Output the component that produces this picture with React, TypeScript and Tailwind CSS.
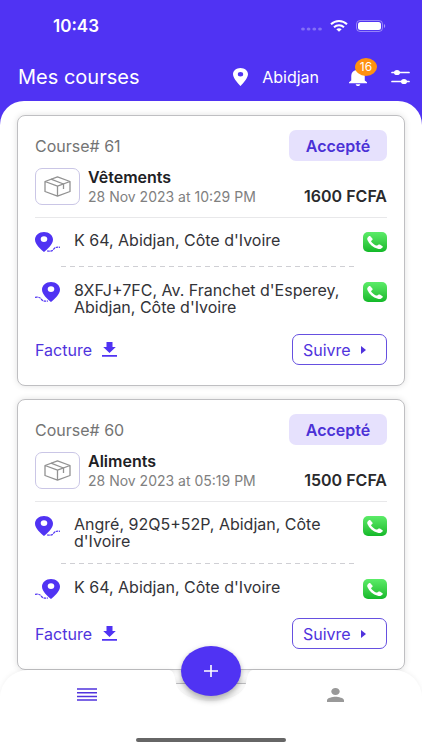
import React from "react";

type Course = {
  id: number;
  title: string;
  date: string;
  price: string;
  from: string;
  to: string;
};

const courses: Course[] = [
  {
    id: 61,
    title: "Vêtements",
    date: "28 Nov 2023 at 10:29 PM",
    price: "1600 FCFA",
    from: "K 64, Abidjan, Côte d'Ivoire",
    to: "8XFJ+7FC, Av. Franchet d'Esperey, Abidjan, Côte d'Ivoire",
  },
  {
    id: 60,
    title: "Aliments",
    date: "28 Nov 2023 at 05:19 PM",
    price: "1500 FCFA",
    from: "Angré, 92Q5+52P, Abidjan, Côte d'Ivoire",
    to: "K 64, Abidjan, Côte d'Ivoire",
  },
];

const PIN =
  "M12 2C8.13 2 5 5.13 5 9c0 5.25 7 13 7 13s7-7.75 7-13c0-3.87-3.13-7-7-7zm0 9.5a2.5 2.5 0 0 1 0-5 2.5 2.5 0 0 1 0 5z";

function StatusBar() {
  return (
    <div className="flex h-13 items-center justify-between pr-9 pl-[53px]">
      <span className="text-[17px] leading-5 font-semibold">10:43</span>
      <div className="flex items-center gap-2">
        <svg className="mt-1.5 h-1 w-[21px]" viewBox="0 0 21 4" fill="#fff" fillOpacity="0.3">
          <ellipse cx="2" cy="2" rx="1.9" ry="1.5" />
          <ellipse cx="7.6" cy="2" rx="1.9" ry="1.5" />
          <ellipse cx="13.3" cy="2" rx="1.9" ry="1.5" />
          <ellipse cx="19" cy="2" rx="1.9" ry="1.5" />
        </svg>
        <svg className="h-3 w-[18px]" viewBox="0 0 18 12" fill="none" stroke="#fff" strokeWidth="2">
          <path d="M1 4.3C5.5 0 12.500 0 17 4.300" />
          <path d="M4 7.200C6.800 4.500 11.200 4.500 14 7.200" />
          <path d="M6.300 9.300C7.700 7.900 10.300 7.900 11.700 9.300L9 11.800z" fill="#fff" stroke="none" />
        </svg>
        <svg className="h-3 w-[30px]" viewBox="0 0 30 12">
          <rect x="0.500" y="0.500" width="26" height="11" rx="3.500" fill="none" stroke="#fff" strokeOpacity="0.4" />
          <rect x="2" y="2" width="23" height="8" rx="2.500" fill="#fff" />
          <path d="M28 4v4c1.600-.6 1.600-3.400 0-4z" fill="#fff" fillOpacity="0.5" />
        </svg>
      </div>
    </div>
  );
}

function Header() {
  return (
    <header className="text-white">
      <StatusBar />
      <div className="flex h-[49px] items-center pr-3 pl-[18px]">
        <h1 className="flex-1 text-[20px] leading-6">Mes courses</h1>
        <button type="button" className="mr-[30px] flex items-center gap-3.5 text-[16px] leading-5">
          <svg className="h-[18px] w-[15px]" viewBox="5 2 14 20" preserveAspectRatio="none" fill="currentColor">
            <path d={PIN} />
          </svg>
          Abidjan
        </button>
        <button type="button" aria-label="Notifications" className="relative mr-6">
          <svg className="h-[18px] w-[18px]" viewBox="4 2.500 16 19.500" preserveAspectRatio="none" fill="currentColor">
            <path d="M12 22c1.100 0 2-.9 2-2h-4c0 1.100.89 2 2 2zm6-6v-5c0-3.070-1.640-5.640-4.500-6.320V4c0-.83-.67-1.500-1.500-1.500s-1.500.67-1.500 1.500v.68C7.630 5.360 6 7.920 6 11v5l-2 2v1h16v-1l-2-2z" />
          </svg>
          <span className="absolute -top-2.5 left-1.5 flex h-[18px] w-[22px] items-center justify-center rounded-[50%] bg-[#ff9110] text-[12px] leading-3">
            16
          </span>
        </button>
        <button type="button" aria-label="Filtres">
          <svg className="h-4 w-[19px]" viewBox="0 0 19 16" fill="currentColor" stroke="currentColor" strokeWidth="1.700" strokeLinecap="round">
            <path d="M1 3.500H18M1 12.500H18" />
            <ellipse cx="6" cy="3.500" rx="3" ry="2.600" stroke="none" />
            <ellipse cx="13" cy="12.500" rx="3" ry="2.600" stroke="none" />
          </svg>
        </button>
      </div>
    </header>
  );
}

function RoutePin({ end = false }: { end?: boolean }) {
  return (
    <svg className="h-5 w-[25px] shrink-0" viewBox="0 0 25 20" fill="#5033f3" aria-hidden="true">
      <path
        fillRule="evenodd"
        d={
          end
            ? "M16 0C21 0 25 3.300 25 7.700C25 12.500 19 17.500 16 20C13 17.500 7 12.500 7 7.700C7 3.300 11 0 16 0ZM16 4.200A3.300 2.900 0 1 0 16 10A3.300 2.900 0 1 0 16 4.200Z"
            : "M9 0C14 0 18 3.300 18 7.700C18 12.500 12 17.500 9 20C6 17.500 0 12.500 0 7.700C0 3.300 4 0 9 0ZM9 4.200A3.300 2.900 0 1 0 9 10A3.300 2.900 0 1 0 9 4.200Z"
        }
      />
      <path
        d={end ? "M0 15.300C5 14.500 5.500 16.500 7 18C8 19 10 19.300 13 19" : "M12 19C15 19.300 17 19 18 18C19.500 16.500 20 14.500 25 15.300"}
        fill="none"
        stroke="#5033f3"
        strokeWidth="1.200"
        strokeDasharray="2.600 0.700"
      />
    </svg>
  );
}

function CallButton({ label }: { label: string }) {
  return (
    <button
      type="button"
      aria-label={label}
      className="flex h-5 w-6 shrink-0 items-center justify-center rounded-[5px] bg-linear-to-b from-[#5bec68] to-[#10b928]"
    >
      <svg className="h-[13px] w-4" viewBox="3 3 18 18" preserveAspectRatio="none" fill="#fff">
        <path d="M6.800 3.300C6.300 2.900 5.600 2.900 5.100 3.400L4 4.600C3.200 5.600 3 7 3.500 8.500C5.600 14.500 9.500 18.600 15.200 20.600C16.600 21.100 18 21 19 20.200L20.400 19C21 18.500 21 17.700 20.400 17.200L17.500 14.900C16.900 14.500 16.200 14.500 15.700 15L14.500 16C14.100 16.300 13.600 16.300 13.100 16C10.900 14.800 9 12.900 7.800 10.800C7.500 10.300 7.600 9.900 7.900 9.500L8.900 8.500C9.400 7.900 9.500 7.200 9 6.500Z" />
      </svg>
    </button>
  );
}

function AddressRow({ address, end }: { address: string; end?: boolean }) {
  return (
    <div className="flex min-h-[21px] items-start">
      <RoutePin end={end} />
      <p className="mr-3 ml-3.5 flex-1 text-[16px] leading-[17px] text-[#333338]">{address}</p>
      <CallButton label={"Appeler : " + address} />
    </div>
  );
}

function CourseCard({ course }: { course: Course }) {
  return (
    <article className="rounded-lg border border-[#bfbfc2] bg-white px-[17px] pt-3.5 pb-5 shadow-[0_0_6px_rgba(0,0,0,0.12)]">
      <div className="flex items-center justify-between">
        <h2 className="text-[16px] leading-5 text-[#747474]">Course# {course.id}</h2>
        <span className="flex h-[31px] w-[98px] items-center justify-center rounded-[7px] bg-[#e6e1fd] text-[16px] leading-5 font-semibold text-[#4b31d6]">
          Accepté
        </span>
      </div>
      <div className="mt-[7px] flex h-[37px] items-center">
        <div className="mr-2 flex h-[37px] w-[45px] shrink-0 items-center justify-center rounded-[7px] border border-[#cac6e6]">
          <svg className="h-[21px] w-[27px]" viewBox="0 0 27 21" fill="none" stroke="#929292" strokeWidth="1.300" strokeLinejoin="round" aria-hidden="true">
            <path d="M13.500 0.800L26 5.500V15.500L13.500 20.200L1 15.500V5.500ZM1 5.500L13.500 10.200L26 5.500M13.500 10.200V20.200" />
            <path d="M7 3.200L19.500 8V13" />
          </svg>
        </div>
        <div className="min-w-0 flex-1 whitespace-nowrap">
          <h3 className="text-[16px] leading-5 font-semibold text-[#202024]">{course.title}</h3>
          <p className="text-[14px] leading-5 text-[#808080]">{course.date}</p>
        </div>
        <strong className="self-end text-[16px] leading-[17px] font-semibold whitespace-nowrap text-[#29292c]">{course.price}</strong>
      </div>
      <hr className="mt-3 border-[#e8e8ea]" />
      <div className="mt-3.5">
        <AddressRow address={course.from} />
        <svg className="mt-[13px] mb-[15px] ml-[26px] block h-px w-[296px]" aria-hidden="true">
          <line x1="0" y1="0.500" x2="100%" y2="0.500" stroke="#cfcfd4" strokeDasharray="5 4" />
        </svg>
        <AddressRow address={course.to} end />
      </div>
      <div className="mt-[18px] flex items-center justify-between text-[16px] leading-5 text-[#5033dd]">
        <button type="button" className="flex items-center gap-2.5">
          Facture
          <svg className="h-[15px] w-[15px]" viewBox="0 0 15 15" fill="#5033f3" aria-hidden="true">
            <path d="M4.500 0H10.500V5H13.800L7.500 11L1.200 5H4.500ZM0 13H15V14.700H0Z" />
          </svg>
        </button>
        <button type="button" className="flex h-[31px] w-[95px] items-center gap-2.5 rounded-[7px] border border-[#6650e0] pl-2.5">
          Suivre
          <svg className="h-2 w-[5px]" viewBox="0 0 5 8" fill="#5033dd" aria-hidden="true">
            <path d="M0 0L5 4L0 8Z" />
          </svg>
        </button>
      </div>
    </article>
  );
}

function BottomNav() {
  return (
    <nav className="absolute inset-x-0 bottom-0 h-20 drop-shadow-[0_-1px_2px_rgba(0,0,0,0.05)]">
      <div className="flex h-full">
        <div className="flex flex-1 items-start justify-center rounded-tl-[28px] bg-white pt-[18px] pl-1">
          <button type="button" aria-label="Courses">
            <svg className="h-[13px] w-5" viewBox="0 0 20 13" stroke="#5033dd" strokeWidth="1.500">
              <path d="M0 1H20M0 4.700H20M0 8.400H20M0 12H20" />
            </svg>
          </button>
        </div>
        <svg className="h-20 w-[84px] shrink-0" viewBox="0 0 84 80" fill="#fff" aria-hidden="true">
          <path d="M0 0C5 1 6 7 7 13C12 37 72 37 77 13C78 7 79 1 84 0V80H0Z" />
        </svg>
        <div className="flex flex-1 items-start justify-center rounded-tr-[28px] bg-white pt-[18px] pr-1">
          <button type="button" aria-label="Profil">
            <svg className="h-3.5 w-[17px]" viewBox="4 4 16 16" preserveAspectRatio="none" fill="#999">
              <path d="M12 12c2.210 0 4-1.790 4-4s-1.790-4-4-4-4 1.790-4 4 1.790 4 4 4zm0 2c-2.670 0-8 1.340-8 4v2h16v-2c0-2.660-5.330-4-8-4z" />
            </svg>
          </button>
        </div>
      </div>
      <button
        type="button"
        aria-label="Nouvelle course"
        className="absolute -top-6 left-1/2 flex h-[50px] w-[60px] -translate-x-1/2 items-center justify-center rounded-[50%] bg-[#5033f3] shadow-[0_4px_6px_rgba(0,0,0,0.3)]"
      >
        <svg className="h-3 w-3.5" viewBox="0 0 14 12" stroke="#fff" strokeWidth="1.600">
          <path d="M0 6H14M7 0V12" />
        </svg>
      </button>
      <div className="absolute bottom-2 left-1/2 h-1 w-[150px] -translate-x-1/2 rounded-full bg-[#666]" />
    </nav>
  );
}

export default function App() {
  return (
    <div className="relative flex h-screen flex-col overflow-hidden bg-[#5033f3] font-[Inter,Roboto,sans-serif]">
      <Header />
      <main className="flex min-h-0 flex-1 flex-col gap-[13px] overflow-hidden rounded-t-[24px] bg-white px-[17px] pt-3.5 *:shrink-0">
        {courses.map((course) => (
          <CourseCard key={course.id} course={course} />
        ))}
        <div className="h-20 rounded-lg border border-[#bfbfc2] bg-white shadow-[0_0_6px_rgba(0,0,0,0.12)]" />
      </main>
      <BottomNav />
    </div>
  );
}
